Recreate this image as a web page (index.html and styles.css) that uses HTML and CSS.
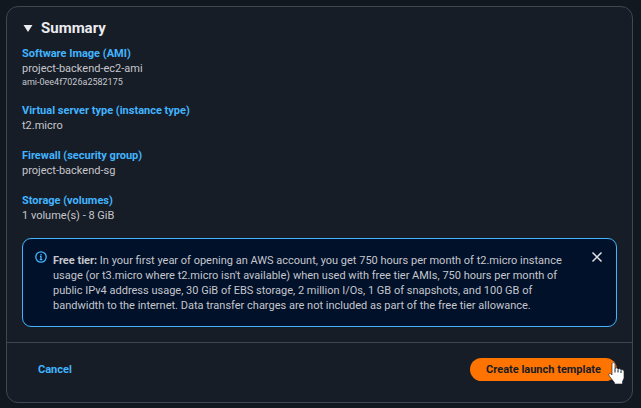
FILE: index.html
```html
<!DOCTYPE html>
<html lang="en">
<head>
<meta charset="utf-8">
<meta name="viewport" content="width=device-width, initial-scale=1">
<title>Summary</title>
<link rel="stylesheet" href="styles.css">
</head>
<body>
<main class="card">
  <details class="summary" open>
    <summary class="summary-title">
      <svg class="caret" viewBox="0 0 10 8" aria-hidden="true"><path d="M0.500 1h9L5 8z"/></svg>
      <h2>Summary</h2>
    </summary>
    <div class="content">
      <section class="field">
        <a href="#ami">Software Image (AMI)</a>
        <p>project-backend-ec2-ami</p>
        <p class="small">ami-0ee4f7026a2582175</p>
      </section>
      <section class="field">
        <a href="#type">Virtual server type (instance type)</a>
        <p>t2.micro</p>
      </section>
      <section class="field">
        <a href="#firewall">Firewall (security group)</a>
        <p>project-backend-sg</p>
      </section>
      <section class="field">
        <a href="#storage">Storage (volumes)</a>
        <p>1 volume(s) - 8 GiB</p>
      </section>
      <aside class="alert">
        <svg class="info" viewBox="0 0 12 12" aria-hidden="true"><circle cx="6" cy="6" r="5.2"/><path d="M6 3v1.3M5 5.5h1v3M4.7 8.6h2.6"/></svg>
        <p class="alert-text"><strong>Free tier:</strong> In your first year of opening an AWS account, you get 750 hours per month of t2.micro instance<br>usage (or t3.micro where t2.micro isn't available) when used with free tier AMIs, 750 hours per month of<br>public IPv4 address usage, 30 GiB of EBS storage, 2 million I/Os, 1 GB of snapshots, and 100 GB of<br>bandwidth to the internet. Data transfer charges are not included as part of the free tier allowance.</p>
        <button class="close" type="button" aria-label="Close"><svg viewBox="0 0 12 12" aria-hidden="true"><path d="M1.5 1.5l9 9M10.5 1.5l-9 9"/></svg></button>
      </aside>
    </div>
  </details>
  <footer class="actions">
    <button class="cancel" type="button">Cancel</button>
    <button class="create" type="button">Create launch template
      <svg class="pointer" viewBox="0 0 17 23" aria-hidden="true"><path d="M4 1.8C4 .2 7 .2 7 1.8V6.500C8 5.500 9.800 5.700 10 7.200C11 6.300 12.800 6.600 13 8C14.300 7.300 16 8 16 9.500V15.500C16 17 14.500 18.500 14.500 20V22H6.500V20.500C4.500 18.500 3 16 1.200 13.800C0 12 2 10.700 3.200 12L4 13z"/><path class="fingers" d="M7 6.500v4M10 7.500V10.500M13 8.500V11"/></svg>
    </button>
  </footer>
</main>
</body>
</html>
```
FILE: styles.css
```css
* { box-sizing: border-box; }
body {
  margin: 0;
  padding: 6px 8px 6px 6px;
  background: #12181f;
  color: #c6c6cd;
  font: 11px/15px Roboto, "Noto Sans", sans-serif;
}
h2, p { margin: 0; }
button { border: 0; background: none; padding: 0; font: inherit; cursor: pointer; }
.card {
  border: 1px solid #424650;
  border-radius: 12px;
  background: #161d26;
}
.summary { padding: 11px 15px 15px; }
.summary-title {
  display: flex;
  align-items: center;
  gap: 8px;
  list-style: none;
  height: 20px;
  color: #ebebf0;
  cursor: pointer;
}
.summary-title h2 { font-size: 15px; line-height: 20px; }
.caret { width: 10px; height: 8px; margin-left: 1px; fill: currentColor; }
.content { padding-top: 8px; }
.field { margin-bottom: 15px; }
.field a { display: block; color: #42b4ff; font-weight: 700; text-decoration: none; }
.small { font-size: 9px; line-height: 12px; }
.alert {
  display: flex;
  align-items: flex-start;
  border: 1px solid #42b4ff;
  border-radius: 9px;
  background: #001129;
  padding: 12px 12px 11px;
}
.info { flex: none; width: 12px; height: 12px; fill: none; stroke: #42b4ff; stroke-width: 1.3; }
.alert-text { flex: 1; margin: 2px 6px; white-space: nowrap; }
.close { flex: none; width: 14px; height: 12px; color: #dedee3; }
.close svg { display: block; width: 12px; height: 12px; margin: auto; fill: none; stroke: currentColor; stroke-width: 1.5; }
.actions {
  display: flex;
  justify-content: space-between;
  align-items: center;
  border-top: 1px solid #424650;
  padding: 15px 15px 21px;
}
.cancel { padding: 4px 16px; color: #42b4ff; font-weight: 700; }
.create {
  position: relative;
  padding: 4px 16px;
  border-radius: 12px;
  background: #ff7300;
  color: #161d26;
  font-weight: 700;
}
.pointer { position: absolute; top: 4px; right: -8px; width: 17px; height: 23px; fill: #fff; stroke: #161d26; stroke-width: 0.6; }
.fingers { fill: none; stroke-width: 1; }
```
